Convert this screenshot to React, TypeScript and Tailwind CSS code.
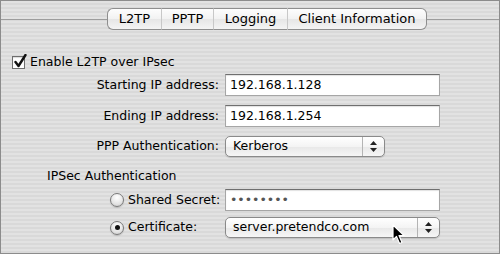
const font = { fontFamily: '"DejaVu Sans", "Liberation Sans", sans-serif' };

function Tab({ label, w, first, last }: { label: string; w: string; first?: boolean; last?: boolean }) {
  return (
    <div
      className={`${w} h-full flex items-center justify-center text-[13px] bg-[linear-gradient(#fdfdfd,#f2f2f2_50%,#e6e6e6_51%,#f4f4f4)] border-y border-[#8e8e8e] ${
        first ? 'border-l rounded-l-[6px]' : 'border-l border-l-[#c8c8c8]'
      } ${last ? 'border-r rounded-r-[6px]' : ''}`}
    >
      {label}
    </div>
  );
}

function Popup({ value, w }: { value: string; w: string }) {
  return (
    <div className={`${w} h-[21px] flex items-stretch rounded-[5px] border border-[#8a8a8a] bg-[linear-gradient(#ffffff,#f4f4f4_50%,#e8e8e8_51%,#f6f6f6)] shadow-[0_1px_1px_rgba(0,0,0,0.15)]`}>
      <div className="flex-1 flex items-center pl-[7px]">{value}</div>
      <div className="w-[22px] flex items-center justify-center border-l border-[#b4b4b4]">
        <svg width="7" height="11" viewBox="0 0 7 11">
          <path d="M3.5 0 L7 4 L0 4 Z" fill="#222" />
          <path d="M0 7 L7 7 L3.5 11 Z" fill="#222" />
        </svg>
      </div>
    </div>
  );
}

function TextField({ value, w, muted }: { value: string; w: string; muted?: boolean }) {
  return (
    <div className={`${w} h-[22px] flex items-center pl-[4px] bg-white border border-[#a6a6a6] border-t-[#6f6f6f] shadow-[inset_0_1px_1px_rgba(0,0,0,0.12)] ${muted ? 'text-[#555]' : ''}`}>
      {value}
    </div>
  );
}

function Radio({ on }: { on?: boolean }) {
  return (
    <div className="shrink-0 w-[14px] h-[14px] rounded-full border border-[#7a7a7a] bg-[radial-gradient(circle_at_50%_30%,#ffffff,#e4e4e4_60%,#c8c8c8)] flex items-center justify-center shadow-[0_1px_1px_rgba(0,0,0,0.15)]">
      {on && <div className="w-[5px] h-[5px] rounded-full bg-[#111]" />}
    </div>
  );
}

export default function App() {
  return (
    <div
      style={font}
      className="relative w-[500px] h-[254px] overflow-hidden border border-[#8c8c8c] text-[12.5px] text-black whitespace-nowrap bg-[repeating-linear-gradient(180deg,#e2e2e2_0px,#e2e2e2_2px,#d9d9d9_2px,#d9d9d9_4px)]"
    >
      {/* Tabs */}
      <div className="flex items-center h-[22px] mt-[7px]">
        <div className="w-[106px] h-px bg-[#9c9c9c]" />
        <div className="flex h-full">
          <Tab label="L2TP" w="w-[54px]" first />
          <Tab label="PPTP" w="w-[52px]" />
          <Tab label="Logging" w="w-[74px]" />
          <Tab label="Client Information" w="w-[140px]" last />
        </div>
        <div className="flex-1 h-px bg-[#9c9c9c]" />
      </div>

      {/* Enable checkbox */}
      <div className="flex items-center h-[16px] mt-[24px] pl-[11px]">
        <div className="relative shrink-0 w-[13px] h-[13px] bg-white border border-[#6e6e6e] shadow-[inset_0_1px_1px_rgba(0,0,0,0.15)]">
          <svg className="absolute -top-[3px] left-[1px]" width="13" height="14" viewBox="0 0 13 14">
            <path d="M1.5 8 L4.5 12 L11.5 1" fill="none" stroke="#111" strokeWidth="2.4" strokeLinecap="round" strokeLinejoin="round" />
          </svg>
        </div>
        <span className="ml-[5px]">Enable L2TP over IPsec</span>
      </div>

      <div className="flex items-center mt-[4px]">
        <div className="w-[218px] shrink-0 text-right">Starting IP address:</div>
        <div className="ml-[6px]"><TextField value="192.168.1.128" w="w-[215px]" /></div>
      </div>

      <div className="flex items-center mt-[9px]">
        <div className="w-[218px] shrink-0 text-right">Ending IP address:</div>
        <div className="ml-[6px]"><TextField value="192.168.1.254" w="w-[215px]" /></div>
      </div>

      <div className="flex items-center mt-[9px]">
        <div className="w-[218px] shrink-0 text-right">PPP Authentication:</div>
        <div className="ml-[6px]"><Popup value="Kerberos" w="w-[160px]" /></div>
      </div>

      <div className="h-[16px] flex items-center mt-[11px] pl-[46px]">IPSec Authentication</div>

      <div className="flex items-center mt-[5px]">
        <div className="w-[218px] shrink-0 flex items-center pl-[109px]">
          <Radio />
          <span className="ml-[4px]">Shared Secret:</span>
        </div>
        <div className="ml-[6px]"><TextField value="••••••••" w="w-[215px]" muted /></div>
      </div>

      <div className="flex items-center mt-[6px]">
        <div className="w-[218px] shrink-0 flex items-center pl-[109px]">
          <Radio on />
          <span className="ml-[4px]">Certificate:</span>
        </div>
        <div className="ml-[6px]"><Popup value="server.pretendco.com" w="w-[215px]" /></div>
      </div>

      {/* mouse cursor */}
      <svg className="absolute left-[391px] top-[223px]" width="14" height="21" viewBox="0 0 14 21">
        <path d="M1 1 L1 16 L4.5 12.5 L7.5 19.5 L10 18.5 L7 11.5 L12 11.5 Z" fill="#000" stroke="#fff" strokeWidth="1.2" strokeLinejoin="round" />
      </svg>
    </div>
  );
}
